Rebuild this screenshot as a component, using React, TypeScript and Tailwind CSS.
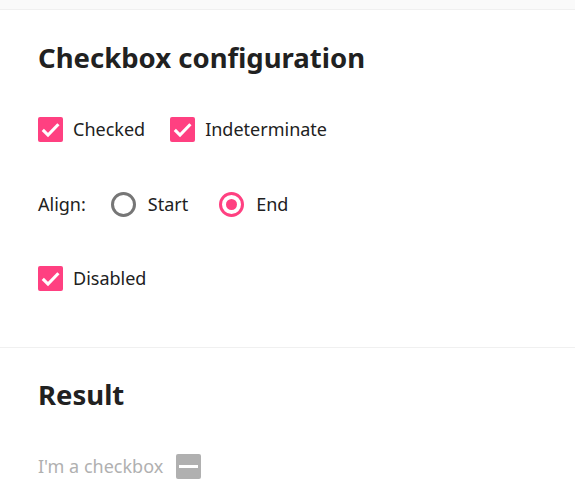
import React from "react";

const PINK = "#ff4081";

function CheckBox({ checked = true, indeterminate = false, disabled = false }: { checked?: boolean; indeterminate?: boolean; disabled?: boolean }) {
  const bg = disabled ? "bg-[#b0b0b0]" : "bg-[#ff4081]";
  return (
    <span className={`inline-flex h-[25px] w-[25px] shrink-0 items-center justify-center rounded-[2px] ${bg}`}>
      {indeterminate ? (
        <span className="h-[3px] w-[19px] bg-white" />
      ) : checked ? (
        <svg viewBox="0 0 24 24" className="h-[25px] w-[25px]" fill="none">
          <path d="M4.6 12.4 9.6 17.4 19.6 7" stroke="white" strokeWidth="3" />
        </svg>
      ) : null}
    </span>
  );
}

function Radio({ checked }: { checked?: boolean }) {
  return (
    <span
      className={`inline-flex h-[25px] w-[25px] shrink-0 items-center justify-center rounded-full border-[3px] ${
        checked ? "border-[#ff4081]" : "border-[#767676]"
      }`}
    >
      {checked ? <span className="h-[11px] w-[11px] rounded-full" style={{ background: PINK }} /> : null}
    </span>
  );
}

function Labeled({ children, label }: React.PropsWithChildren<{ label: string }>) {
  return (
    <label className="flex items-center gap-[10px]">
      {children}
      <span>{label}</span>
    </label>
  );
}

export default function App() {
  return (
    <div
      className="min-h-screen bg-[#fafafa] pt-[9px] text-[18px] text-[#212121]"
      style={{ fontFamily: '"Noto Sans", "Noto Sans CJK JP", sans-serif' }}
    >
      <section className="border-t border-[#f0f0f0] bg-white px-[38px] pt-[30px] pb-[57px]">
        <h2 className="h-9 text-[27.5px] font-bold leading-9">Checkbox configuration</h2>

        <div className="mt-[41px] flex h-6 items-center gap-[25px]">
          <Labeled label="Checked">
            <CheckBox />
          </Labeled>
          <Labeled label="Indeterminate">
            <CheckBox />
          </Labeled>
        </div>

        <div className="mt-[51px] flex h-6 items-center">
          <span className="mr-[25px]">Align:</span>
          <label className="mr-[31px] flex items-center gap-3">
            <Radio />
            <span>Start</span>
          </label>
          <label className="flex items-center gap-3">
            <Radio checked />
            <span>End</span>
          </label>
        </div>

        <div className="mt-[50px] flex h-6 items-center">
          <Labeled label="Disabled">
            <CheckBox />
          </Labeled>
        </div>
      </section>

      <section className="border-t border-[#f0f0f0] bg-white px-[38px] pt-[29px] pb-4">
        <h2 className="h-9 text-[27.5px] font-bold leading-9">Result</h2>
        <div className="mt-[41px] flex h-6 items-center gap-[13px] text-[#b0b0b0]">
          <span>I'm a checkbox</span>
          <CheckBox indeterminate disabled />
        </div>
      </section>
    </div>
  );
}
